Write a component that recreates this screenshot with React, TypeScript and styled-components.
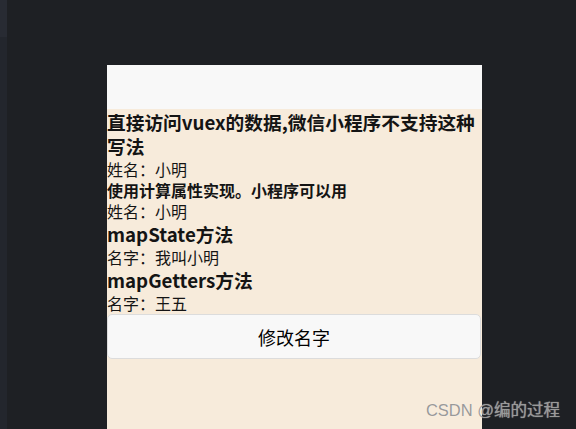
import React from 'react';
import styled, { createGlobalStyle } from 'styled-components';

const GlobalStyle = createGlobalStyle`
  html, body {
    margin: 0;
    padding: 0;
    height: 100%;
    background: #1e2024;
    overflow: hidden;
  }
  #root {
    height: 100%;
  }
`;

const Screen = styled.div`
  position: relative;
  display: flex;
  width: 576px;
  height: 429px;
  background: #1e2024;
  font-family: 'Noto Sans CJK SC', 'Liberation Sans', sans-serif;
`;

const SideStrip = styled.div`
  width: 7px;
  display: flex;
  flex-direction: column;
  background: #23262d;
`;

const StripTop = styled.div`
  height: 37px;
  background: #282b33;
`;

const Stage = styled.div`
  flex: 1;
  padding: 65px 0 0 100px;
`;

const Phone = styled.div`
  width: 375px;
  height: 364px;
  display: flex;
  flex-direction: column;
  background: #f7ebdb;
`;

const NavBar = styled.div`
  height: 44px;
  flex: none;
  background: #f8f8f8;
`;

const Content = styled.div`
  padding-top: 1px;
  color: #141414;
`;

const Heading = styled.div<{ $small?: boolean }>`
  font-weight: 700;
  font-size: ${({ $small }) => ($small ? '16px' : '18.72px')};
  line-height: ${({ $small }) => ($small ? '20px' : '24px')};
`;

const Line = styled.div`
  font-size: 16px;
  line-height: 22px;
`;

const ActionButton = styled.button`
  display: block;
  box-sizing: border-box;
  width: 374px;
  height: 45px;
  margin: 0;
  padding: 0 14px;
  background: #f8f8f8;
  border: 1px solid #dcdcdc;
  border-radius: 5px;
  font-family: 'Noto Sans CJK SC', 'Liberation Sans', sans-serif;
  font-size: 18px;
  color: #000;
`;

const Watermark = styled.div`
  position: absolute;
  right: 16px;
  bottom: 8px;
  font-family: 'Liberation Sans', 'Noto Sans CJK SC', sans-serif;
  font-size: 16.5px;
  color: #999999;
  text-shadow: 0 0 1px rgba(255, 255, 255, 0.6);
`;

export default function App() {
  return (
    <>
      <GlobalStyle />
      <Screen>
        <SideStrip>
          <StripTop />
        </SideStrip>
        <Stage>
          <Phone>
            <NavBar />
            <Content>
              <Heading>直接访问vuex的数据,微信小程序不支持这种写法</Heading>
              <Line>姓名：小明</Line>
              <Heading $small>使用计算属性实现。小程序可以用</Heading>
              <Line>姓名：小明</Line>
              <Heading>mapState方法</Heading>
              <Line>名字：我叫小明</Line>
              <Heading>mapGetters方法</Heading>
              <Line>名字：王五</Line>
              <ActionButton>修改名字</ActionButton>
            </Content>
          </Phone>
        </Stage>
        <Watermark>CSDN @编的过程</Watermark>
      </Screen>
    </>
  );
}
